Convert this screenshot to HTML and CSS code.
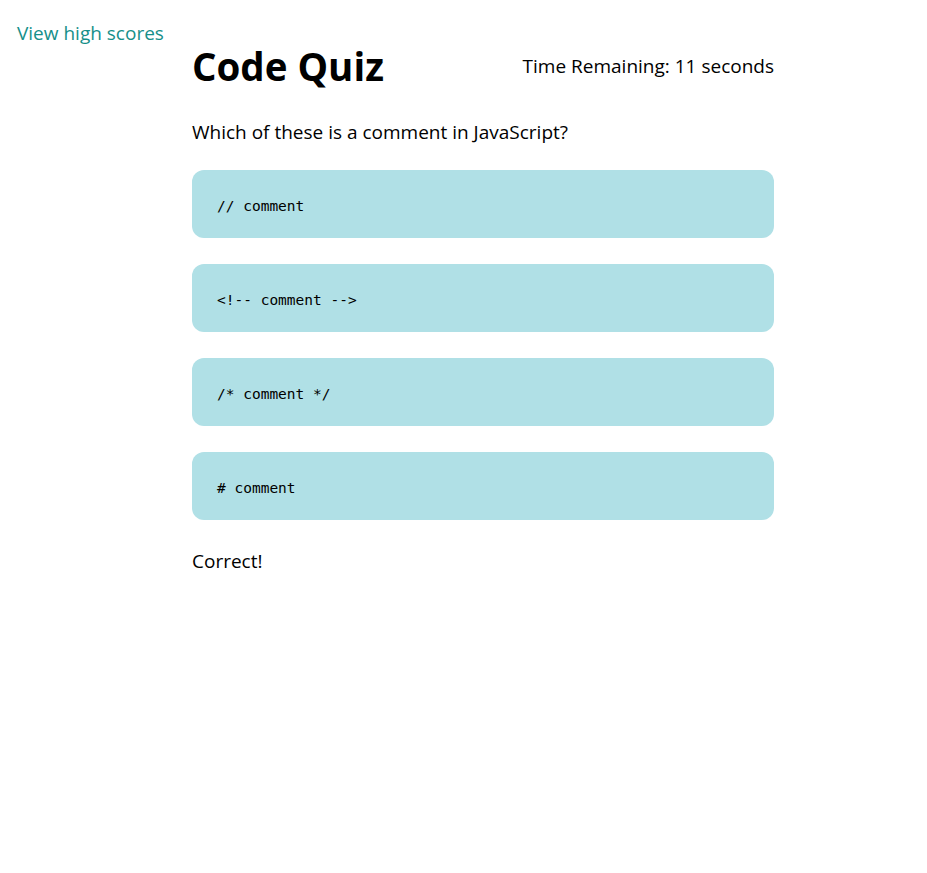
FILE: index.html
```html
<!DOCTYPE html>
<html lang="en">
<head>
<meta charset="utf-8">
<title>Code Quiz</title>
<link rel="stylesheet" href="styles.css">
</head>
<body>
<nav class="top-nav">
  <a class="scores-link" href="#">View high scores</a>
</nav>
<main class="quiz">
  <header class="quiz-header">
    <h1 class="quiz-title">Code Quiz</h1>
    <p class="timer">Time Remaining: 11 seconds</p>
  </header>
  <p class="question">Which of these is a comment in JavaScript?</p>
  <div class="options">
    <button class="option">// comment</button>
    <button class="option">&lt;!-- comment --&gt;</button>
    <button class="option">/* comment */</button>
    <button class="option"># comment</button>
  </div>
  <p class="feedback">Correct!</p>
</main>
</body>
</html>
```
FILE: styles.css
```css
body {
  margin: 8px;
  font-family: "Open Sans", "Noto Sans", sans-serif;
  font-size: 19px;
  color: #000;
  background: #fff;
}

.top-nav {
  padding: 12px 0 0 9px;
}

.scores-link {
  color: #168f8a;
  text-decoration: none;
  font-size: 19px;
}

.quiz {
  margin-left: 184px;
  width: 582px;
}

.quiz-header {
  display: flex;
  justify-content: space-between;
  align-items: center;
  margin-top: -6px;
}

.quiz-title {
  margin: 0;
  font-size: 38.5px;
  font-weight: 700;
}

.timer {
  margin: 0;
}

.question {
  margin: 27px 0 25px;
}

.options {
  display: flex;
  flex-direction: column;
  gap: 26px;
}

.option {
  display: block;
  width: 100%;
  height: 68px;
  padding: 3px 25px 0;
  border: none;
  border-radius: 12px;
  background: #b0e0e6;
  text-align: left;
  font-family: "DejaVu Sans Mono", "Liberation Mono", monospace;
  font-size: 14.5px;
  color: #000;
}

.feedback {
  margin: 28px 0 0;
}
```
